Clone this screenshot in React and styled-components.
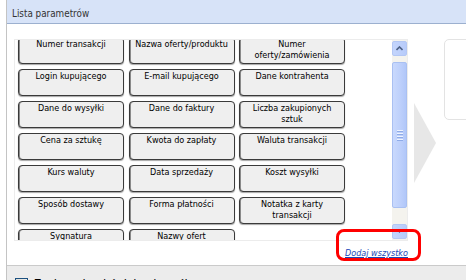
import React from "react";
import styled, { createGlobalStyle } from "styled-components";

const Global = createGlobalStyle`
  html, body {
    margin: 0;
    padding: 0;
    width: 466px;
    height: 280px;
    overflow: hidden;
    background: #ffffff;
  }
  * { box-sizing: border-box; }
`;

const FONT = `"DejaVu Sans Condensed", "DejaVu Sans", sans-serif`;

const Page = styled.div`
  width: 466px;
  height: 280px;
  padding-left: 6px;
  overflow: hidden;
  font-family: ${FONT};
  font-stretch: condensed;
`;

const Panel = styled.div`
  width: 520px;
  height: 280px;
  border-left: 1px solid #c4c4c4;
  display: flex;
  flex-direction: column;
  overflow: hidden;
`;

const Header = styled.div`
  flex: none;
  height: 24px;
  padding: 8px 0 0 5px;
  background: #d7e3f8;
  border-bottom: 1px solid #9cb0cf;
  font-size: 9.8px;
  line-height: 12px;
  color: #333;
`;

const Body = styled.div`
  flex: none;
  height: 241px;
  padding: 15px 0 0 7px;
  background: #fff;
`;

const MainRow = styled.div`
  display: flex;
  align-items: flex-start;
`;

const LeftCol = styled.div`
  width: 394px;
  display: flex;
  flex-direction: column;
`;

const ScrollBox = styled.div`
  height: 202px;
  border: 1px solid #ececec;
  display: flex;
`;

const Viewport = styled.div`
  flex: 1;
  overflow: hidden;
  padding-left: 3px;
`;

const Grid = styled.div`
  margin-top: -3px;
  display: grid;
  grid-template-columns: repeat(3, 106px);
  grid-auto-rows: 27px;
  column-gap: 4.5px;
  row-gap: 5px;
`;

const ParamButton = styled.div`
  border: 1px solid #3a3a3a;
  border-radius: 4px;
  background: #efefef;
  box-shadow: 0 1px 1px rgba(0, 0, 0, 0.35), inset 1px 0 0 #8a8a8a;
  padding: 1px 2px 0;
  text-align: center;
  font-size: 9px;
  line-height: 11px;
  color: #000;
  overflow: hidden;
`;

const ScrollBar = styled.div`
  width: 15px;
  display: flex;
  flex-direction: column;
  background: #f4f3ee;
  padding: 1px 0;
`;

const ArrowBtn = styled.div`
  height: 15px;
  border: 1px solid #b3c7f4;
  border-radius: 2px;
  background: linear-gradient(90deg, #c4d5fc, #b7cbfa);
  display: flex;
  align-items: center;
  justify-content: center;
`;

const Track = styled.div`
  flex: 1;
  display: flex;
  flex-direction: column;
  padding-top: 6px;
`;

const Thumb = styled.div`
  height: 146px;
  border: 1px solid #a9c0f2;
  border-radius: 2px;
  background: linear-gradient(90deg, #c9d9fd, #bccffb 60%, #b1c7f9);
  display: flex;
  flex-direction: column;
  align-items: center;
  justify-content: center;
  gap: 1px;
`;

const Grip = styled.div`
  width: 6px;
  height: 1px;
  background: #eef3fe;
  box-shadow: 0 1px 0 #8eabe8;
  margin-bottom: 1px;
`;

const LinkRow = styled.div`
  display: flex;
  justify-content: flex-end;
`;

const LinkWrap = styled.div`
  position: relative;
`;

const AddAll = styled.a`
  font-size: 9px;
  line-height: 12px;
  font-style: italic;
  color: #1a47b8;
  text-decoration: underline;
  cursor: pointer;
`;

const Highlight = styled.div`
  position: absolute;
  left: -9px;
  top: -12px;
  width: 85px;
  height: 32px;
  border: 3px solid #ff0000;
  border-radius: 8px;
  pointer-events: none;
`;

const NextArrow = styled.svg`
  margin: 64px 0 0 6px;
  flex: none;
`;

const SidePanel = styled.div`
  margin-left: 8px;
  width: 80px;
  height: 81px;
  border: 1px solid #e3e3e3;
  border-radius: 5px;
  flex: none;
`;

const Footer = styled.div`
  flex: none;
  height: 40px;
  background: #ececec;
  border-top: 1px solid #cacaca;
  padding: 12px 0 0 8px;
  display: flex;
  align-items: flex-start;
  gap: 6px;
`;

const CheckBox = styled.span`
  width: 13px;
  height: 13px;
  border: 1px solid #1c5180;
  background: linear-gradient(135deg, #dcdcd6, #fff);
  flex: none;
`;

const FooterLabel = styled.span`
  font-family: "Liberation Sans", sans-serif;
  font-size: 12px;
  line-height: 13px;
  color: #000;
`;

const params = [
  "Numer transakcji",
  "Nazwa oferty/produktu",
  "Numer oferty/zamówienia",
  "Login kupującego",
  "E-mail kupującego",
  "Dane kontrahenta",
  "Dane do wysyłki",
  "Dane do faktury",
  "Liczba zakupionych sztuk",
  "Cena za sztukę",
  "Kwota do zapłaty",
  "Waluta transakcji",
  "Kurs waluty",
  "Data sprzedaży",
  "Koszt wysyłki",
  "Sposób dostawy",
  "Forma płatności",
  "Notatka z karty transakcji",
  "Sygnatura",
  "Nazwy ofert",
];

export default function App() {
  return (
    <Page>
      <Global />
      <Panel>
        <Header>Lista parametrów</Header>
        <Body>
          <MainRow>
            <LeftCol>
              <ScrollBox>
                <Viewport>
                  <Grid>
                    {params.map((p) => (
                      <ParamButton key={p}>{p}</ParamButton>
                    ))}
                  </Grid>
                </Viewport>
                <ScrollBar>
                  <ArrowBtn>
                    <svg width="7" height="5" viewBox="0 0 7 5">
                      <path d="M0.5 4 L3.5 1 L6.5 4" stroke="#4d6185" strokeWidth="1.6" fill="none" />
                    </svg>
                  </ArrowBtn>
                  <Track>
                    <Thumb>
                      <Grip />
                      <Grip />
                      <Grip />
                      <Grip />
                    </Thumb>
                  </Track>
                  <ArrowBtn>
                    <svg width="5" height="3" viewBox="0 0 5 3">
                      <path d="M0 0 L5 0 L2.5 3 Z" fill="#4d6185" />
                    </svg>
                  </ArrowBtn>
                </ScrollBar>
              </ScrollBox>
              <LinkRow>
                <LinkWrap>
                  <AddAll>Dodaj wszystko</AddAll>
                  <Highlight />
                </LinkWrap>
              </LinkRow>
            </LeftCol>
            <NextArrow width="22" height="80" viewBox="0 0 22 80">
              <polygon points="0,0 22,40 0,80" fill="#e7e7e7" />
            </NextArrow>
            <SidePanel />
          </MainRow>
        </Body>
        <Footer>
          <CheckBox />
          <FooterLabel>Zachowaj wybór jako domyślny</FooterLabel>
        </Footer>
      </Panel>
    </Page>
  );
}
